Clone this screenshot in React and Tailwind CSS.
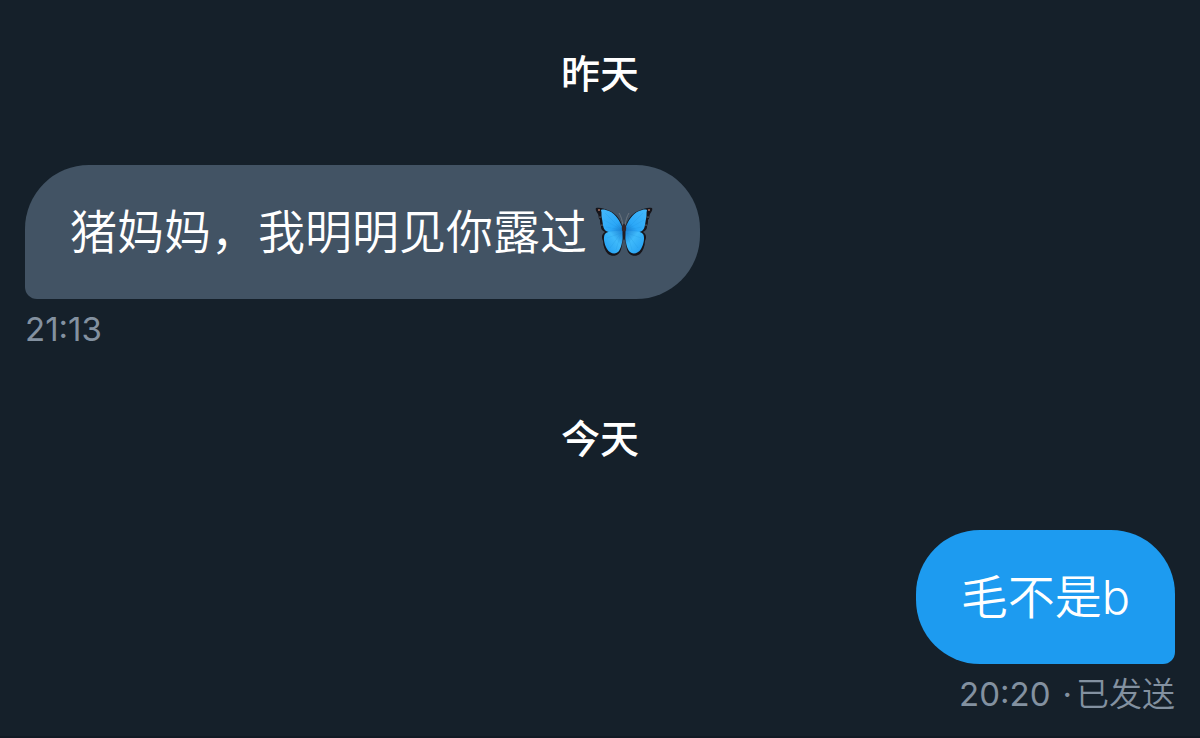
import React from 'react';

const conversation = [
  {
    day: '昨天',
    messages: [{ id: 1, text: '猪妈妈，我明明见你露过', butterfly: true, time: '21:13', mine: false }],
  },
  {
    day: '今天',
    messages: [{ id: 2, text: '毛不是b', time: '20:20', status: '已发送', mine: true }],
  },
];

const App = () => (
  <main className="min-h-screen bg-[#15202a] border-b-2 border-[#111a24] px-[25px] pt-11 pb-4 font-['Inter','Noto_Sans_CJK_SC',sans-serif]">
    {conversation.map((group) => (
      <DayGroup key={group.day} group={group} />
    ))}
  </main>
);

// --- DayGroup ---
const DayGroup = ({ group }) => (
  <section className="mb-[55px] last:mb-0">
    <h2 className="text-center text-[39px] leading-[60px] font-medium text-white">{group.day}</h2>
    <div className="mt-[61px] flex flex-col">
      {group.messages.map((message) => (
        <Message key={message.id} message={message} />
      ))}
    </div>
  </section>
);

// --- Message ---
const Message = ({ message }) => (
  <div className={`flex flex-col ${message.mine ? 'items-end' : 'items-start'}`}>
    <p
      className={`flex items-center px-[45px] py-8 text-[47px] leading-[70px] font-[350] text-white ${
        message.mine
          ? 'bg-[#1d9bf0] rounded-[64px] rounded-br-xl'
          : 'bg-[#425364] rounded-[64px] rounded-bl-xl'
      }`}
    >
      <span>{message.text}</span>
      {message.butterfly && <Butterfly />}
    </p>
    <div className="mt-[5px] text-[33px] leading-[50px] text-[#8391a0]">
      <time>{message.time}</time>
      {message.status && (
        <>
          <span className="ml-3 mr-1">·</span>
          <span className="font-[350]">{message.status}</span>
        </>
      )}
    </div>
  </div>
);

// --- Butterfly ---
const Wing = () => (
  <>
    <path
      d="M28 21C26 14 22 7 15 4C10 2 5 0 1 1C0 3 2 5 3 7C4 9 3 11 5 13C5 15 5 17 6 19C6 21 6 23 10 25C7 27 6 30 8 34C8 39 10 44 13 47C17 50 23 49 25 45C27 41 28 33 28 25Z"
      fill="#17151a"
    />
    <path
      d="M28 22C25 14 21 7 14 4C11 3 8 2 6 3C7 6 6 9 7 12C8 17 8 22 11 24C17 27 23 26 28 23Z"
      fill="url(#upperWing)"
    />
    <path d="M28 23C22 25 13 23 10 27C8 30 9 37 12 42C15 47 21 48 24 44C27 39 28 32 28 23Z" fill="url(#lowerWing)" />
    <path
      d="M27 23L10 6M27 23L9 13M27 23L11 20M26 26L12 31M26 26L15 41M26 26L21 43"
      stroke="#1684d0"
      strokeWidth="0.5"
      opacity="0.3"
      fill="none"
    />
    <circle cx="4" cy="3" r="1" fill="#a86f5e" />
    <circle cx="5" cy="10" r="0.5" fill="#c3d4e2" />
    <circle cx="7" cy="18" r="0.5" fill="#c3d4e2" />
  </>
);

const Butterfly = () => (
  <svg role="img" aria-label="蝴蝶" viewBox="0 0 58 50" className="h-[50px] w-[58px] ml-2 mr-0.5">
    <defs>
      <linearGradient id="upperWing" x1="0" y1="0" x2="1" y2="1">
        <stop offset="0" stopColor="#45b9fb" />
        <stop offset="0.65" stopColor="#2ba8f8" />
        <stop offset="1" stopColor="#1675c8" />
      </linearGradient>
      <linearGradient id="lowerWing" x1="1" y1="0" x2="0" y2="1">
        <stop offset="0" stopColor="#1c80d4" />
        <stop offset="0.4" stopColor="#3fbafb" />
        <stop offset="1" stopColor="#209bf0" />
      </linearGradient>
    </defs>
    <path d="M28 18C27 13 26 9 24 6M30 18C31 13 32 9 34 6" stroke="#737b84" strokeWidth="0.8" fill="none" />
    <Wing />
    <g transform="translate(58 0) scale(-1 1)">
      <Wing />
    </g>
    <ellipse cx="29" cy="25" rx="1.5" ry="8.5" fill="#241c22" />
    <ellipse cx="29" cy="21" rx="2.2" ry="3.5" fill="#33262b" />
  </svg>
);

export default App;
